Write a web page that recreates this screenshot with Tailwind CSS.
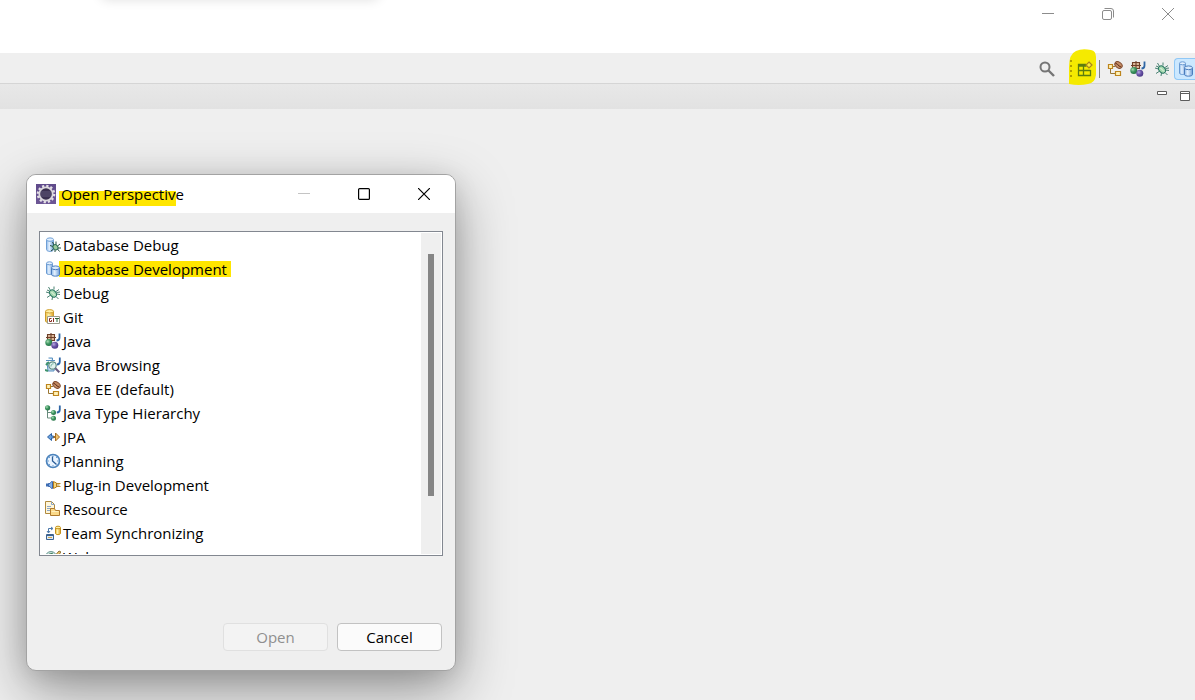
<!DOCTYPE html>
<html lang="en">
<head>
  <meta charset="UTF-8" />
  <meta name="viewport" content="width=device-width, initial-scale=1.0"/>
  <title>Open Perspective</title>
  <script src="https://cdn.jsdelivr.net/npm/@tailwindcss/browser@4"></script>
</head>
<body class="relative flex min-h-screen flex-col overflow-hidden bg-[#efefef] font-['Open_Sans','Noto_Sans',sans-serif] text-[15px] text-black">

  <!-- icon sprites -->
  <svg class="absolute size-0" aria-hidden="true">
    <defs>
      <linearGradient id="blue" x1="0" x2="1" y1="0" y2="0">
        <stop offset="0" stop-color="#8db9e8"/><stop offset=".4" stop-color="#e6f2ff"/><stop offset="1" stop-color="#6f9fd8"/>
      </linearGradient>
      <linearGradient id="gold" x1="0" x2="1" y1="0" y2="0">
        <stop offset="0" stop-color="#f0bf3c"/><stop offset=".4" stop-color="#fff3b0"/><stop offset="1" stop-color="#dc9f20"/>
      </linearGradient>
      <radialGradient id="green" cx=".35" cy=".35" r=".7">
        <stop offset="0" stop-color="#a9dcb4"/><stop offset=".5" stop-color="#3d9560"/><stop offset="1" stop-color="#237045"/>
      </radialGradient>
      <radialGradient id="violet" cx=".35" cy=".35" r=".7">
        <stop offset="0" stop-color="#b9acdf"/><stop offset=".5" stop-color="#6b56a8"/><stop offset="1" stop-color="#4a3585"/>
      </radialGradient>
      <linearGradient id="eclipse" x1="0" x2="0" y1="0" y2="1">
        <stop offset="0" stop-color="#5f4a8a"/><stop offset="1" stop-color="#6d5795"/>
      </linearGradient>
    </defs>

    <symbol id="bug" viewBox="0 0 16 16">
      <path d="M5.5 5.500 3.500 2M9 4.500 9 1.500M11 6.500 14 4.500M11.500 9 15 9.500M11 11.500 13.500 14M7.500 12 7 15M5 10.500 2 12.500M4.500 8 1 7M4.500 6 2 5M11.500 7.500 15 7" stroke="#4a8272" stroke-width="1" fill="none"/>
      <ellipse cx="8" cy="8.500" rx="3" ry="4" transform="rotate(-40 8 8.500)" fill="#a5d8b0" stroke="#267560"/>
      <path d="m6.500 7 3.500 3.500" stroke="#eefbe8"/>
    </symbol>
    <symbol id="db-debug" viewBox="0 0 16 16">
      <path d="M1.500 3v9.500C1.500 15 8.500 15 8.500 12.500V3" fill="url(#blue)" stroke="#6f9fd6"/>
      <ellipse cx="5" cy="2.600" rx="3.500" ry="1.700" fill="#e2f0ff" stroke="#6f9fd6"/>
      <path d="M9 8 7.500 5M11 7.500V4.500M12.500 9 15 7M13 11 16 11M12.500 12 14.500 14.500M10 13v2M8.500 12 6 14M8 9.500 5 8.500" stroke="#234c40"/>
      <ellipse cx="10.500" cy="10.300" rx="2.300" ry="2.800" transform="rotate(-40 10.500 10.300)" fill="#9ccb9c" stroke="#2c6c55"/>
    </symbol>
    <symbol id="db" viewBox="0 0 16 16">
      <path d="M1.500 2.500V12c0 2 6 2 6 0V2.500" fill="url(#blue)" stroke="#6a9ad2"/>
      <ellipse cx="4.500" cy="2.300" rx="3" ry="1.500" fill="#e4f1ff" stroke="#6a9ad2"/>
      <path d="M6.500 7v6.500c0 2.200 8 2.200 8 0V7" fill="url(#blue)" stroke="#4a7cbd"/>
      <ellipse cx="10.500" cy="6.800" rx="4" ry="1.900" fill="#d7e9fc" stroke="#4a7cbd"/>
    </symbol>
    <symbol id="git" viewBox="0 0 16 16">
      <path d="M.5 2.500V12c0 2 8 2 8 0V2.500" fill="url(#gold)" stroke="#c99a2e"/>
      <ellipse cx="4.500" cy="2.300" rx="4" ry="1.700" fill="#fff0a6" stroke="#d0a030"/>
      <path d="M2.500 7.500h12v7h-12z" fill="#fff" stroke="#9a9a8a"/>
      <path d="M6.500 9.500h-2v3h2V11M8.500 9v4" stroke="#8a2f24" fill="none"/>
      <path d="M10 9.500h4M12 9.500V13" stroke="#2d6a35" fill="none"/>
    </symbol>
    <symbol id="java" viewBox="0 0 16 16">
      <path d="M2.500 1.500h7v6h-7zM6 0v8M1 4.500h10" fill="#dcb89a" stroke="#6e3f28" stroke-width="1.100"/>
      <path d="M14.500.5v4c0 2.500-1.500 3-3 3" fill="none" stroke="#2f66a5" stroke-width="1.800"/>
      <circle cx="3.800" cy="9.500" r="3.500" fill="url(#green)"/>
      <circle cx="9.800" cy="12.300" r="3.500" fill="url(#violet)"/>
    </symbol>
    <symbol id="java-browse" viewBox="0 0 16 16">
      <path d="M1 3.500h9M3.500 1h4v2M2 5l1 9h6l1-9" fill="#bfdaf0" stroke="#5b91bf"/>
      <path d="M14.800.5v4c0 2.500-1.500 3-3 3" fill="none" stroke="#2f66a5" stroke-width="1.800"/>
      <path d="M1 8 4 5M0 13l3 1" stroke="#3f936c" stroke-width="2"/>
      <circle cx="7.500" cy="8.500" r="3.700" fill="#e1f3ef" stroke="#608c83" stroke-width="1.200"/>
      <path d="M6 9.500C6 7.500 7 6.800 8.500 6.800" fill="none" stroke="#69a995"/>
      <path d="m10.300 11.300 4 4" stroke="#665b80" stroke-width="2"/>
    </symbol>
    <symbol id="java-ee" viewBox="0 0 16 16">
      <path d="M3.500 7v5.500H9M5 5.500h3" fill="none" stroke="#9a7632"/>
      <path d="M1.500 3.500h4v4h-4zM8.500 10.500h5v4h-5z" fill="#fff2b8" stroke="#bd851d" stroke-width="1.200"/>
      <ellipse cx="11.500" cy="4" rx="4" ry="2.800" transform="rotate(35 11.500 4)" fill="#c48c64" stroke="#804a2e"/>
      <path d="M8.500 2.500c3 0 2 2.500 5.500 3.500" fill="none" stroke="#5c2b18"/>
    </symbol>
    <symbol id="hierarchy" viewBox="0 0 16 16">
      <path d="M2.500 3v10H9M2.500 7.500H9" fill="none" stroke="#688b7c"/>
      <circle cx="2.600" cy="2.800" r="2.600" fill="url(#green)"/>
      <circle cx="8.500" cy="7.500" r="2.500" fill="url(#green)"/>
      <circle cx="8.500" cy="13.300" r="2.500" fill="url(#green)"/>
      <path d="M14.800.5v4c0 2.500-1.500 3-3 3" fill="none" stroke="#2f66a5" stroke-width="1.800"/>
    </symbol>
    <symbol id="jpa" viewBox="0 0 16 16">
      <path d="M6.500 4.500v2.500h2v2h-2v2.500L2.500 8z" fill="#69a0dc" stroke="#2d62a6"/>
      <path d="M10.500 4v8l4-4z" fill="#f0c16c" stroke="#a46e25"/>
      <path d="M8.500 8h2" stroke="#a46e25" stroke-width="2"/>
    </symbol>
    <symbol id="planning" viewBox="0 0 16 16">
      <circle cx="8" cy="8" r="6.500" fill="#eaf4ff" stroke="#4d84bd" stroke-width="1.700"/>
      <path d="M8 2.500v1.500M8 12v1.500M2.500 8H4M12 8h1.500M4 4l1 1M12 4l-1 1M4 12l1-1" stroke="#6f9fce"/>
      <path d="M7.500 3.500V8l4 3.500" fill="none" stroke="#2a5d97" stroke-width="1.300"/>
    </symbol>
    <symbol id="plugin" viewBox="0 0 16 16">
      <path d="M1 8h3" stroke="#3d6db3" stroke-width="3"/>
      <path d="M3.500 6.500H5l1.500-2h1v7h-1L5 9.500H3.500z" fill="#82aee4" stroke="#3c69b0"/>
      <path d="M8.500 4.500 11.500 6v4l-3 1.500z" fill="#f9d97a" stroke="#b27d22"/>
      <path d="M12 6.500h3.500M12 9.500h3.500M12 8h2.500" stroke="#b98a2c"/>
    </symbol>
    <symbol id="resource" viewBox="0 0 16 16">
      <path d="M.5.5h6l3 3v9h-9z" fill="#fff6da" stroke="#b08a3e"/>
      <path d="M6.500.5v3h3M2 5.500h4M2 7.500h4M2 9.500h3" fill="none" stroke="#8ba6c7"/>
      <path d="M5.500 14.500v-7h4l1 2h4v5z" fill="#fbd988" stroke="#b07a2c"/>
      <path d="M6.500 10.500h7" stroke="#fff0bd"/>
    </symbol>
    <symbol id="team" viewBox="0 0 16 16">
      <path d="M10.500 3v5.500c0 1.500 5 1.500 5 0V3" fill="url(#gold)" stroke="#c4901d"/>
      <ellipse cx="13" cy="2.500" rx="2.500" ry="1.300" fill="#fff0a0" stroke="#c4901d"/>
      <path d="M1.500 9.500h7v5h-7z" fill="#dbe9f7" stroke="#3d638f"/>
      <path d="M2 10.500h6" stroke="#3d638f"/><path d="M3 12.500h4" stroke="#d5a94b"/>
      <path d="M3.500 7.500v-4h4M6 2l2 1.500L6 5M2 6l1.500 2L5 6" fill="none" stroke="#4b78aa"/>
    </symbol>
    <symbol id="web" viewBox="0 0 16 16">
      <circle cx="6" cy="8" r="5.500" fill="#c6e0db" stroke="#719b94"/>
      <path d="m8 9 6-7 2 1-6 8z" fill="#e8c16a" stroke="#8f7336"/>
      <path d="M3 6c2-2 4-1 5-2" fill="none" stroke="#3f7c5c"/>
    </symbol>
    <symbol id="open-perspective" viewBox="0 0 16 16">
      <path d="M9 3.500H1.500v11h12V9M1.500 5h8M6.500 5v9.500M1.500 9.500h12" fill="none" stroke="#5c7d10" stroke-width="1.300"/>
      <path d="m12 1 3 3-3 3-3-3z" fill="#fbec3a" stroke="#a98519" stroke-width="1.200"/>
    </symbol>
    <symbol id="eclipse-logo" viewBox="0 0 20 20">
      <path d="M0 0h20v20H0z" fill="url(#eclipse)"/>
      <circle cx="10" cy="10" r="8" fill="none" stroke="#e4e0e6" stroke-width="2.600" stroke-dasharray="2.200 1.990"/>
      <circle cx="10" cy="10" r="6.700" fill="#3a3050" stroke="#dcd9de" stroke-width="1.800"/>
      <path d="M4.800 8h10.400M4.500 10h11M4.800 12h10.400" stroke="#746b8c" stroke-width=".7"/>
    </symbol>
  </svg>

  <header class="flex h-[53px] items-start justify-end gap-12 bg-white pt-2 pr-[21px] text-[#8c8c8c]">
    <div class="absolute -top-4 left-[100px] h-4 w-[280px] rounded-lg shadow-[0_0_12px_rgba(0,0,0,0.12)]"></div>
    <button type="button" aria-label="Minimize window"><svg class="size-3" viewBox="0 0 12 12"><path d="M0 5.500h12" stroke="currentColor"/></svg></button>
    <button type="button" aria-label="Restore window"><svg class="size-3" viewBox="0 0 12 12" fill="none" stroke="currentColor"><rect x=".5" y="2.500" width="9" height="9" rx="1.500"/><path d="M2.500.5H9A2.500 2.500 0 0 1 11.500 3v6.500"/></svg></button>
    <button type="button" aria-label="Close window"><svg class="size-3" viewBox="0 0 12 12"><path d="m0 0 12 12M12 0 0 12" stroke="currentColor"/></svg></button>
  </header>

  <nav class="flex h-[31px] items-center justify-end border-b border-[#d5d5d5] pt-px" aria-label="Perspectives">
    <button type="button" class="mr-[14px] text-[#757575]" aria-label="Search">
      <svg class="size-4" viewBox="0 0 16 16" fill="none" stroke="currentColor"><circle cx="6" cy="6" r="4.500" stroke-width="2"/><path d="m9.500 9.500 5.500 5.500" stroke-width="2.400"/></svg>
    </button>
    <div class="relative flex h-[30px] w-[26px] items-center">
      <svg class="absolute -top-[5px] left-0 h-9 w-[27px]" viewBox="0 0 27 36"><path d="M0 35 0 18Q0 5 7 2 13-1 22 1 27 2 27 8V26Q26 34 19 35 10 37 0 35z" fill="#f5ea00"/></svg>
      <svg class="absolute left-px h-[17px] w-[2px]" viewBox="0 0 2 17"><path d="M1 0v17" stroke="#b0a000" stroke-width="2" stroke-dasharray="2 3"/></svg>
      <button type="button" class="relative ml-2" aria-label="Open Perspective"><svg class="size-4"><use href="#open-perspective"/></svg></button>
    </div>
    <div class="mr-[3px] ml-1 h-[18px] w-px bg-[#808080]"></div>
    <button type="button" class="flex w-[23px] justify-center" aria-label="Java EE"><svg class="size-4"><use href="#java-ee"/></svg></button>
    <button type="button" class="flex w-6 justify-center" aria-label="Java"><svg class="size-4"><use href="#java"/></svg></button>
    <button type="button" class="flex w-6 justify-center" aria-label="Debug"><svg class="size-4"><use href="#bug"/></svg></button>
    <button type="button" class="flex h-[22px] w-[21px] items-center rounded-l-sm border border-r-0 border-[#90c8f6] bg-[#cce8ff] pl-[3px]" aria-label="Database Development" aria-pressed="true"><svg class="size-4 shrink-0"><use href="#db"/></svg></button>
  </nav>

  <div class="flex h-[25px] items-start justify-end gap-[13px] bg-linear-to-b from-[#e8e8e8] to-[#e2e2e2] pt-[7px] pr-[5px] text-[#5c5c5c]">
    <button type="button" aria-label="Minimize"><svg class="h-[10px] w-[10px]" viewBox="0 0 10 10"><path d="M.5.500h9v3h-9z" fill="#fff" stroke="currentColor"/></svg></button>
    <button type="button" aria-label="Maximize"><svg class="h-[10px] w-[10px]" viewBox="0 0 10 10"><path d="M.5.500h9v9h-9zM0 2.500h10" fill="#fff" stroke="currentColor"/></svg></button>
  </div>

  <main role="dialog" aria-labelledby="title" class="absolute top-[174px] left-[26px] flex w-[430px] flex-col rounded-[10px] border border-[#a3a3a3] bg-[#efefef] shadow-[0_20px_56px_rgba(0,0,0,0.38),0_4px_24px_rgba(0,0,0,0.10)]">
    <div class="flex h-[38px] items-center rounded-t-[9px] bg-white pr-[25px] pl-[9px]">
      <svg class="size-5"><use href="#eclipse-logo"/></svg>
      <h1 id="title" class="relative ml-[5px] grow">
        <span class="absolute top-2 -left-[2px] h-[15px] w-[117px] bg-[#ffe600]"></span>
        <span class="relative">Open Perspective</span>
      </h1>
      <div class="flex gap-12">
        <button type="button" disabled class="text-[#c4c4c4]" aria-label="Minimize dialog"><svg class="size-3" viewBox="0 0 12 12"><path d="M0 5.500h12" stroke="currentColor"/></svg></button>
        <button type="button" aria-label="Maximize dialog"><svg class="size-3" viewBox="0 0 12 12"><rect x=".6" y=".6" width="10.800" height="10.800" rx="1" fill="none" stroke="currentColor" stroke-width="1.200"/></svg></button>
        <button type="button" aria-label="Close dialog"><svg class="size-3" viewBox="0 0 12 12"><path d="m0 0 12 12M12 0 0 12" stroke="currentColor" stroke-width="1.200"/></svg></button>
      </div>
    </div>

    <div class="mx-3 mt-[18px] flex h-[325px] border border-[#828790] bg-white p-px">
      <ul class="grow overflow-hidden pl-1">
        <li><button type="button" class="flex h-6 items-center gap-[2px]"><svg class="size-4"><use href="#db-debug"/></svg>Database Debug</button></li>
        <li><button type="button" class="flex h-6 items-center"><svg class="relative z-10 size-4"><use href="#db"/></svg><span class="-ml-[2px] bg-[#ffe600] px-1 leading-4">Database Development</span></button></li>
        <li><button type="button" class="flex h-6 items-center gap-[2px]"><svg class="size-4"><use href="#bug"/></svg>Debug</button></li>
        <li><button type="button" class="flex h-6 items-center gap-[2px]"><svg class="size-4"><use href="#git"/></svg>Git</button></li>
        <li><button type="button" class="flex h-6 items-center gap-[2px]"><svg class="size-4"><use href="#java"/></svg>Java</button></li>
        <li><button type="button" class="flex h-6 items-center gap-[2px]"><svg class="size-4"><use href="#java-browse"/></svg>Java Browsing</button></li>
        <li><button type="button" class="flex h-6 items-center gap-[2px]"><svg class="size-4"><use href="#java-ee"/></svg>Java EE (default)</button></li>
        <li><button type="button" class="flex h-6 items-center gap-[2px]"><svg class="size-4"><use href="#hierarchy"/></svg>Java Type Hierarchy</button></li>
        <li><button type="button" class="flex h-6 items-center gap-[2px]"><svg class="size-4"><use href="#jpa"/></svg>JPA</button></li>
        <li><button type="button" class="flex h-6 items-center gap-[2px]"><svg class="size-4"><use href="#planning"/></svg>Planning</button></li>
        <li><button type="button" class="flex h-6 items-center gap-[2px]"><svg class="size-4"><use href="#plugin"/></svg>Plug-in Development</button></li>
        <li><button type="button" class="flex h-6 items-center gap-[2px]"><svg class="size-4"><use href="#resource"/></svg>Resource</button></li>
        <li><button type="button" class="flex h-6 items-center gap-[2px]"><svg class="size-4"><use href="#team"/></svg>Team Synchronizing</button></li>
        <li><button type="button" class="flex h-6 items-center gap-[2px]"><svg class="size-4"><use href="#web"/></svg>Web</button></li>
      </ul>
      <div class="flex w-5 justify-center bg-[#efefef] pt-[21px]">
        <div class="h-[242px] w-[6px] bg-[#858585]"></div>
      </div>
    </div>

    <div class="mt-[67px] mr-[13px] mb-[19px] flex justify-end gap-[9px]">
      <button type="button" disabled class="h-7 w-[105px] rounded border border-[#e0e0e0] bg-[#f3f3f3] text-[#8f8f8f]">Open</button>
      <button type="button" class="h-7 w-[105px] rounded border border-[#c2c2c2] bg-[#fbfbfb]">Cancel</button>
    </div>
  </main>
</body>
</html>
